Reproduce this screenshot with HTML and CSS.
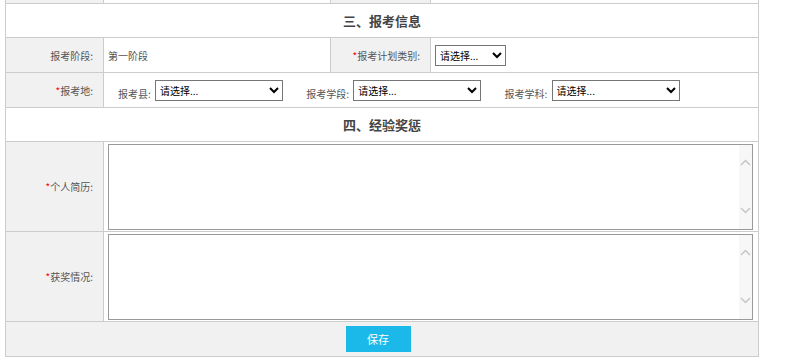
FILE: index.html
```html
<!DOCTYPE html>
<html lang="zh-CN">
<head>
  <meta charset="UTF-8" />
  <title>报考信息</title>
  <link rel="stylesheet" href="styles.css">
</head>
<body>
  <table class="form-table">
    <colgroup>
      <col class="col-label" />
      <col class="col-value" />
      <col class="col-label2" />
      <col />
    </colgroup>
    <tr class="row-top">
      <td class="label"></td>
      <td></td>
      <td class="label"></td>
      <td></td>
    </tr>

    <!-- 三、报考信息 -->
    <tr class="row-title">
      <td colspan="4">三、报考信息</td>
    </tr>
    <tr class="row">
      <td class="label">报考阶段:</td>
      <td class="value">第一阶段</td>
      <td class="label"><span class="req">*</span>报考计划类别:</td>
      <td class="value">
        <select class="sel sel-small"><option>请选择...</option></select>
      </td>
    </tr>
    <tr class="row">
      <td class="label"><span class="req">*</span>报考地:</td>
      <td class="value place" colspan="3">
        <span class="field">报考县:</span>
        <select class="sel"><option>请选择...</option></select>
        <span class="field">报考学段:</span>
        <select class="sel"><option>请选择...</option></select>
        <span class="field">报考学科:</span>
        <select class="sel"><option>请选择...</option></select>
      </td>
    </tr>

    <!-- 四、经验奖惩 -->
    <tr class="row-title">
      <td colspan="4">四、经验奖惩</td>
    </tr>
    <tr class="row-text">
      <td class="label"><span class="req">*</span>个人简历:</td>
      <td class="value" colspan="3">
        <div class="area-box">
          <textarea class="area"></textarea>
          <div class="scroll">
            <svg width="11" height="7" viewBox="0 0 11 7"><path d="M1 6 L5.5 1.5 L10 6" fill="none" stroke="#c6c6c6" stroke-width="1.5"/></svg>
            <svg width="11" height="7" viewBox="0 0 11 7"><path d="M1 1 L5.5 5.5 L10 1" fill="none" stroke="#c6c6c6" stroke-width="1.5"/></svg>
          </div>
        </div>
      </td>
    </tr>
    <tr class="row-text">
      <td class="label"><span class="req">*</span>获奖情况:</td>
      <td class="value" colspan="3">
        <div class="area-box">
          <textarea class="area"></textarea>
          <div class="scroll">
            <svg width="11" height="7" viewBox="0 0 11 7"><path d="M1 6 L5.5 1.5 L10 6" fill="none" stroke="#c6c6c6" stroke-width="1.5"/></svg>
            <svg width="11" height="7" viewBox="0 0 11 7"><path d="M1 1 L5.5 5.5 L10 1" fill="none" stroke="#c6c6c6" stroke-width="1.5"/></svg>
          </div>
        </div>
      </td>
    </tr>
    <tr class="row-foot">
      <td colspan="4"><button class="btn-save">保存</button></td>
    </tr>
  </table>
</body>
</html>
```

FILE: styles.css
```css
body {
  margin: 0;
  padding: 0 0 0 5px;
  background: #fff;
  font-family: "Microsoft YaHei", "Noto Sans CJK SC", sans-serif;
  font-size: 10px;
  color: #555;
}

.form-table {
  width: 754px;
  border-collapse: collapse;
  table-layout: fixed;
  margin-top: -1px;
}

.col-label {
  width: 98px;
}

.col-value {
  width: 227px;
}

.col-label2 {
  width: 100px;
}

.form-table td {
  border: 1px solid #ccc;
  padding: 0;
}

.row-top td {
  height: 3px;
}

.label {
  background: #f1f1f1;
  text-align: right;
  padding-right: 10px !important;
}

.req {
  color: #f00;
}

.value {
  padding-left: 4px !important;
}

.row td {
  height: 34px;
}

.row-title td {
  height: 33px;
  text-align: center;
  font-size: 13px;
  font-weight: bold;
  color: #444;
}

.row-text td {
  height: 89px;
}

.place {
  padding-left: 14px !important;
}

.field {
  vertical-align: bottom;
  margin-right: 2px;
}

.field + .sel {
  margin-right: 21px;
}

.sel {
  width: 128px;
  height: 21px;
  border: 1px solid #767676;
  font-family: inherit;
  font-size: 10px;
  color: #000;
  background: #fff;
  padding: 0;
  vertical-align: middle;
}

.sel-small {
  width: 71px;
}

.area-box {
  display: flex;
  box-sizing: border-box;
  width: 645px;
  height: 86px;
  border: 1px solid #999;
  background: #fff;
}

.area {
  flex: 1;
  margin: 0;
  border: none;
  resize: none;
  outline: none;
}

.scroll {
  width: 13px;
  background: #f7f7f7;
  display: flex;
  flex-direction: column;
  justify-content: space-between;
  align-items: center;
  padding: 14px 0 15px;
}

.row-foot td {
  height: 34px;
  background: #f1f1f1;
  text-align: center;
}

.btn-save {
  width: 65px;
  height: 26px;
  margin-right: 8px;
  border: none;
  background: #1bb9e9;
  color: #fff;
  font-family: inherit;
  font-size: 11px;
  vertical-align: middle;
}
```
